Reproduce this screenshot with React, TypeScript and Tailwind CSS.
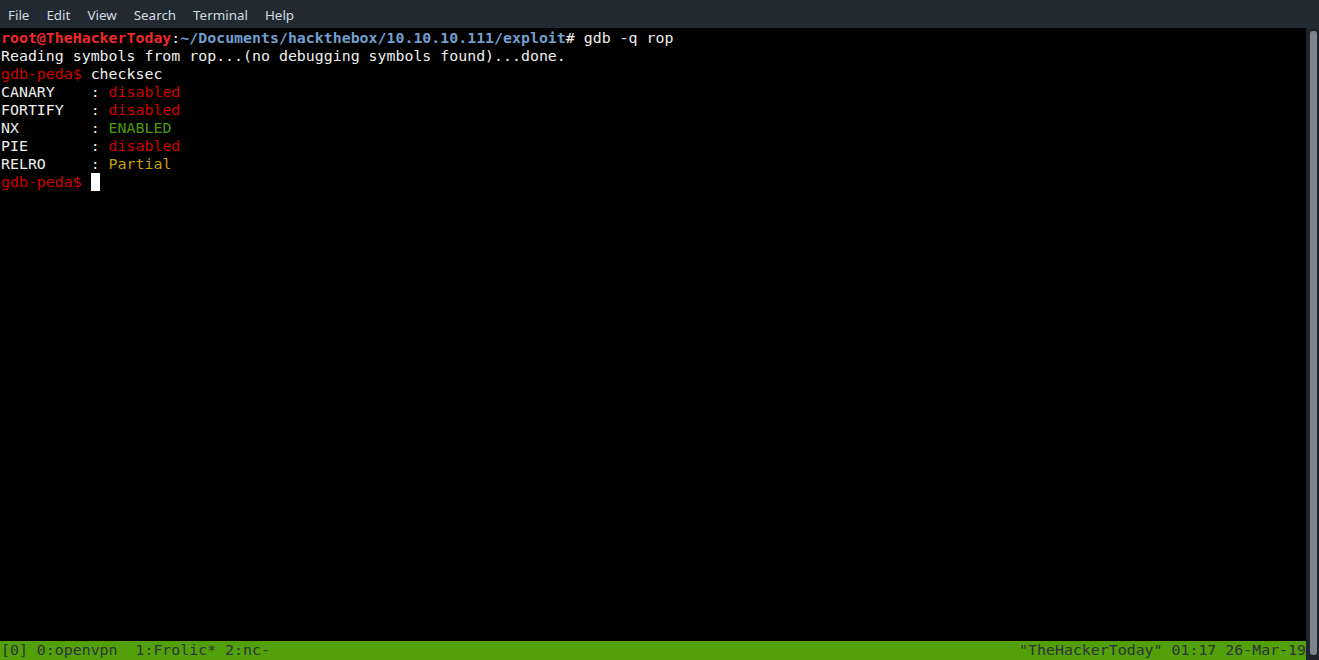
import React from 'react';

const mono = { fontFamily: '"DejaVu Sans Mono", "Liberation Mono", monospace' };

const MENU = ['File', 'Edit', 'View', 'Search', 'Terminal', 'Help'];

const CHECKS: { name: string; value: string; color: string }[] = [
  { name: 'CANARY', value: 'disabled', color: 'text-[#cc0000]' },
  { name: 'FORTIFY', value: 'disabled', color: 'text-[#cc0000]' },
  { name: 'NX', value: 'ENABLED', color: 'text-[#4e9a06]' },
  { name: 'PIE', value: 'disabled', color: 'text-[#cc0000]' },
  { name: 'RELRO', value: 'Partial', color: 'text-[#c4a000]' },
];

const App: React.FC = () => {
  return (
    <div className="w-[1319px] h-[660px] flex flex-col bg-black overflow-hidden">
      <div
        className="h-[28px] shrink-0 bg-[#222a31] flex items-center pl-[8px] pt-[2px] gap-[17px] text-[13.4px] text-[#d3dae3]"
        style={{ fontFamily: '"Noto Sans", "DejaVu Sans", sans-serif' }}
      >
        {MENU.map(m => (
          <span key={m}>{m}</span>
        ))}
      </div>

      <div className="flex flex-1 min-h-0">
        <div className="flex-1 flex flex-col min-w-0">
          <div
            className="flex-1 text-[14.9px] leading-[18px] text-[#eeeeec] whitespace-pre pl-[1px] pt-[1px]"
            style={mono}
          >
            <div>
              <span className="font-bold text-[#ef2929]">root@TheHackerToday</span>
              <span>:</span>
              <span className="font-bold text-[#729fcf]">~/Documents/hackthebox/10.10.10.111/exploit</span>
              <span># gdb -q rop</span>
            </div>
            <div>Reading symbols from rop...(no debugging symbols found)...done.</div>
            <div>
              <span className="text-[#cc0000]">gdb-peda$ </span>checksec
            </div>
            {CHECKS.map(c => (
              <div key={c.name}>
                {c.name.padEnd(10, ' ')}: <span className={c.color}>{c.value}</span>
              </div>
            ))}
            <div className="flex">
              <span className="text-[#cc0000]">gdb-peda$ </span>
              <span className="inline-block w-[9px] h-[18px] bg-white" />
            </div>
          </div>

          <div
            className="h-[19px] shrink-0 bg-[#52a00a] text-[#2e3436] text-[14.9px] leading-[19px] whitespace-pre flex justify-between pl-[1px]"
            style={mono}
          >
            <span>[0] 0:openvpn  1:Frolic* 2:nc-</span>
            <span>"TheHackerToday" 01:17 26-Mar-19</span>
          </div>
        </div>

        <div className="w-[13px] shrink-0 bg-[#1e252b] flex justify-center pt-[3px] pb-[5px] pl-[1px]">
          <div className="w-[7px] h-full rounded-[3px] bg-[#7c8690]" />
        </div>
      </div>
    </div>
  );
};

export default App;
